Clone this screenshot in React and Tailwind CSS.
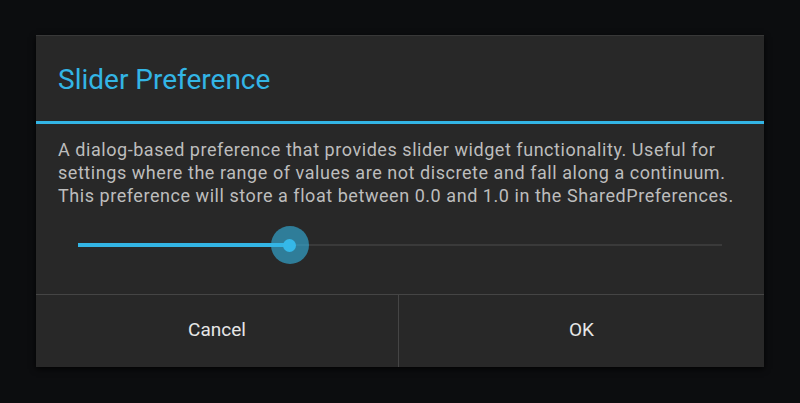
export default function App() {
  const pct = 32.9;
  return (
    <div className="w-[800px] h-[403px] bg-[#0c0d0f] pt-[35px] pl-[36px] font-['Roboto','Liberation_Sans',sans-serif] overflow-hidden">
      <div className="w-[728px] h-[332px] bg-[#282828] flex flex-col shadow-[0_2px_6px_rgba(0,0,0,0.8)] border-t border-[#383838]">
        {/* Title */}
        <div className="h-[85px] pl-[22px] pt-[28px] text-[28px] leading-[32px] text-[#33b5e5]">
          Slider Preference
        </div>
        <div className="h-[3px] bg-[#33b5e5]" />

        {/* Body */}
        <div className="flex-1 flex flex-col">
          <p className="pt-[14px] pl-[22px] text-[18px] leading-[23px] tracking-[0.55px] text-[#bdbdbd] whitespace-nowrap">
            A dialog-based preference that provides slider widget functionality. Useful for
            <br />
            settings where the range of values are not discrete and fall along a continuum.
            <br />
            This preference will store a float between 0.0 and 1.0 in the SharedPreferences.
          </p>
          <div className="mt-[18px] mx-[42px] h-[40px] relative flex items-center">
            <div className="w-full h-[2px] bg-[#3a3a3a]" />
            <div className="absolute left-0 h-[4px] bg-[#33b5e5]" style={{ width: `${pct}%` }} />
            <div
              className="absolute w-[38px] h-[38px] -ml-[19px] rounded-full bg-[#33b5e5]/60 flex items-center justify-center"
              style={{ left: `${pct}%` }}
            >
              <div className="w-[13px] h-[13px] rounded-full bg-[#35b8e8]" />
            </div>
          </div>
        </div>

        {/* Buttons */}
        <div className="h-[73px] border-t border-[#454545] flex text-[19px] text-[#e6e6e6]">
          <div className="w-[363px] border-r border-[#454545] flex items-center justify-center pb-[1px]">Cancel</div>
          <div className="flex-1 flex items-center justify-center pb-[1px]">OK</div>
        </div>
      </div>
    </div>
  );
}
